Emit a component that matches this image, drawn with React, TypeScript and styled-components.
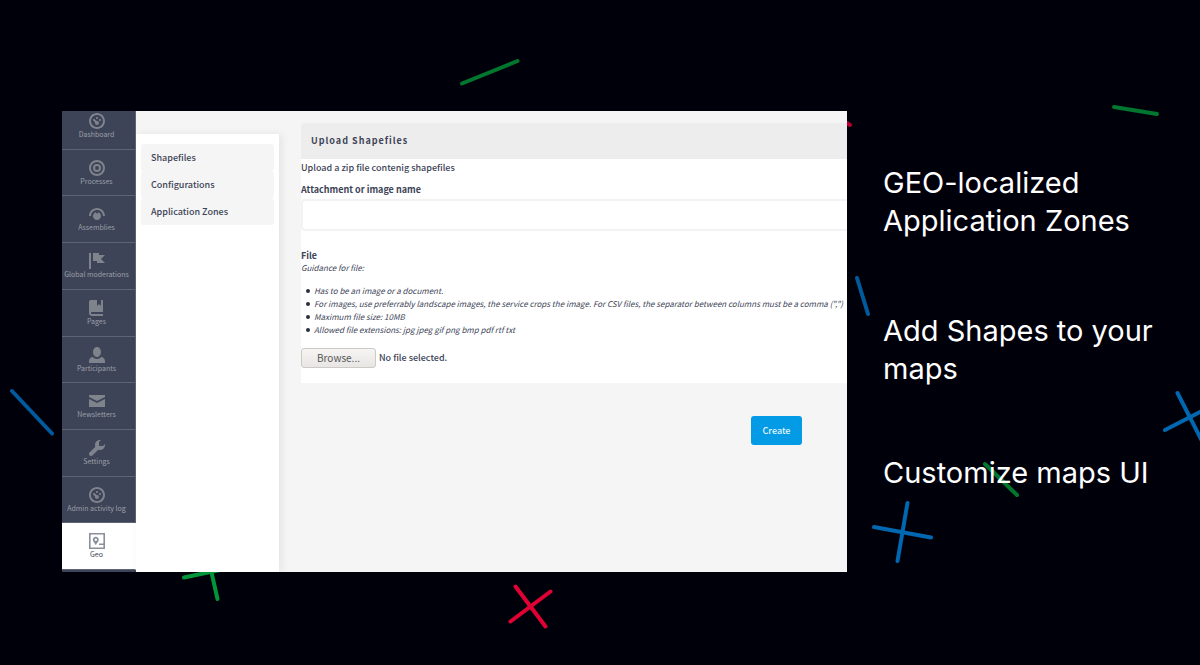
import React, { useRef, useState } from "react";
import styled, { createGlobalStyle } from "styled-components";

const sans = `"Noto Sans CJK SC", "Noto Sans", sans-serif`;
const ink = "#3d4457";

const GlobalStyle = createGlobalStyle`
  *, *::before, *::after { box-sizing: border-box; }
  body { margin: 0; background: #00000b; }
`;

const Page = styled.div`
  position: relative;
  min-height: 100vh;
  overflow: hidden;
  background: #00000b;
`;

const Confetti = styled.svg`
  position: absolute;
  top: 0;
  left: 0;
  fill: none;
  stroke-width: 4;
  stroke-linecap: round;
`;

const Slide = styled.main`
  position: relative;
  display: flex;
  align-items: flex-start;
  gap: 36px;
  padding: 111px 36px 93px 62px;
`;

const Screen = styled.section`
  flex: 1;
  min-width: 0;
  display: flex;
  overflow: hidden;
  background: #f5f5f5;
  color: ${ink};
  font-family: ${sans};
  font-size: 9px;
  font-weight: 500;
  line-height: 14px;
`;

const Sidebar = styled.nav`
  flex: none;
  width: 74px;
  min-height: 469px;
  margin-top: -8px;
  padding-bottom: 2px;
  display: flex;
  flex-direction: column;
  background: #3d4457;
`;

const SideLink = styled.a<{ $active?: boolean }>`
  flex: 1;
  display: flex;
  flex-direction: column;
  align-items: center;
  padding: 10px 4px 0 0;
  border-bottom: 1px solid #5d6473;
  border-right: 1px solid ${(p) => (p.$active ? "#fff" : "#5d6473")};
  background: ${(p) => (p.$active ? "#fff" : "#3d4457")};
  color: ${(p) => (p.$active ? "#3d4457" : "#9b9fa8")};
  font-size: 7px;
  font-weight: 400;
  line-height: 10px;
  white-space: nowrap;
  text-decoration: none;

  svg {
    flex: none;
    width: 16px;
    height: 16px;
    color: ${(p) => (p.$active ? "#8b8f9a" : "#7f838c")};
  }
`;

const Submenu = styled.nav`
  flex: none;
  width: 143px;
  margin-top: 23px;
  padding: 10px 5px;
  background: #fff;
  box-shadow: 3px 0 8px rgba(0, 0, 0, 0.07);
`;

const SubLink = styled.a`
  display: block;
  padding: 0 10px;
  border-radius: 3px;
  background: #f5f5f5;
  color: ${ink};
  line-height: 27px;
  text-decoration: none;
`;

const Form = styled.form`
  flex: 1;
  min-width: 0;
  padding: 12px 0 0 22px;
`;

const Card = styled.div`
  padding-bottom: 15px;
  border-radius: 3px 0 0 0;
  overflow: hidden;
  background: #fff;
`;

const CardTitle = styled.h2`
  margin: 0;
  padding: 0 10px;
  background: #ededed;
  font-size: 9px;
  line-height: 36px;
  letter-spacing: 1px;
`;

const Intro = styled.p`
  margin: 2px 0 8px;
`;

const FieldLabel = styled.label`
  display: block;
  font-weight: 700;
`;

const TextInput = styled.input`
  display: block;
  width: 100%;
  height: 32px;
  margin: 2px 0 18px;
  padding: 0 8px;
  border: 2px solid #f3f3f3;
  border-right: 0;
  border-radius: 4px 0 0 4px;
  background: #fff;
  color: ${ink};
  font: inherit;
`;

const Guidance = styled.div`
  font-size: 8px;
  font-weight: 400;
  font-style: italic;
  line-height: 10px;

  p { margin: 0; }
`;

const Rules = styled.ul`
  margin: 11px 0 12px;
  padding: 0 0 0 5px;
  list-style: none;
  line-height: 13px;
`;

const Rule = styled.li`
  display: flex;
  align-items: center;
  gap: 4px;
  white-space: nowrap;

  &::before {
    content: "";
    width: 4px;
    height: 4px;
    border-radius: 50%;
    background: #2b3040;
  }
`;

const FileRow = styled.div`
  display: flex;
  align-items: center;
  gap: 3px;
`;

const HiddenFile = styled.input`
  position: absolute;
  width: 1px;
  height: 1px;
  opacity: 0;
`;

const BrowseButton = styled.button`
  width: 75px;
  height: 20px;
  padding: 0;
  border: 1px solid #cdc9c5;
  border-radius: 3px;
  background: linear-gradient(#f6f5f4, #e8e6e4);
  color: #555;
  font-family: ${sans};
  font-size: 10px;
  line-height: 14px;
`;

const Actions = styled.div`
  display: flex;
  justify-content: flex-end;
  padding: 33px 45px 0 0;
`;

const CreateButton = styled.button`
  width: 51px;
  height: 29px;
  padding: 0;
  border: 0;
  border-radius: 3px;
  background: #039be5;
  color: #e6f5fd;
  font-family: ${sans};
  font-size: 9px;
  font-weight: 500;
`;

const Captions = styled.aside`
  flex: none;
  width: 281px;
  padding-top: 53px;
  color: #fff;
  font-family: Inter, "Liberation Sans", sans-serif;
`;

const Caption = styled.p<{ $after?: number }>`
  margin: 0 0 ${(p) => p.$after ?? 0}px;
  font-size: 29px;
  line-height: 38px;
`;

const Icon = ({ children }: { children: React.ReactNode }) => (
  <svg viewBox="0 0 8 8" fill="currentColor" aria-hidden="true">
    {children}
  </svg>
);

const gauge = (
  <path d="M4 0c-2.2 0-4 1.8-4 4s1.8 4 4 4 4-1.8 4-4-1.8-4-4-4zm0 1c1.66 0 3 1.34 3 3s-1.34 3-3 3-3-1.34-3-3 1.34-3 3-3zm0 1c-.28 0-.5.22-.5.5s.22.5.5.5.5-.22.5-.5-.22-.5-.5-.5zm-1.66 1a.5.5 0 0 0-.19.84l.91.91c-.02.08-.06.16-.06.25 0 .55.45 1 1 1s1-.45 1-1-.45-1-1-1c-.09 0-.17.04-.25.06l-.91-.91a.5.5 0 0 0-.5-.15zm3.16 0c-.28 0-.5.22-.5.5s.22.5.5.5.5-.22.5-.5-.22-.5-.5-.5z" />
);

const sections: { label: string; icon: React.ReactNode; active?: boolean }[] = [
  { label: "Dashboard", icon: gauge },
  {
    label: "Processes",
    icon: (
      <g fill="none" stroke="currentColor">
        <circle cx="4" cy="4" r="3.5" />
        <circle cx="4" cy="4" r="1.5" />
      </g>
    ),
  },
  {
    label: "Assemblies",
    icon: (
      <path d="M4 1c-2.2 0-4 1.8-4 4h1c0-1.66 1.34-3 3-3s3 1.34 3 3h1c0-2.2-1.8-4-4-4zm-.59 2.09c-.81.25-1.41 1.01-1.41 1.91 0 1.11.89 2 2 2 1.11 0 2-.89 2-2 0-.9-.59-1.65-1.41-1.91l-.59.88-.59-.88z" />
    ),
  },
  { label: "Global moderations", icon: <path d="M0 0v8h1v-8h-1zm2 0v4h2v1h4l-2-1.97 2-2.03h-3v-1h-3z" /> },
  {
    label: "Pages",
    icon: (
      <path d="M1 0c-.07 0-.13.01-.19.03-.39.08-.7.39-.78.78-.03.06-.03.12-.03.19v5.5c0 .83.67 1.5 1.5 1.5h5.5v-1h-5.5c-.28 0-.5-.22-.5-.5s.22-.5.5-.5h5.5v-5.500c0-.28-.22-.5-.5-.5h-.5v3l-1-1-1 1v-3h-3z" />
    ),
  },
  {
    label: "Participants",
    icon: (
      <path d="M4 0c-1.1 0-2 1.12-2 2.5s.9 2.5 2 2.5 2-1.12 2-2.5-.9-2.5-2-2.5zm-2.09 5c-1.06.05-1.91.92-1.91 2v1h8v-1c0-1.08-.84-1.95-1.91-2-.54.61-1.28 1-2.09 1-.81 0-1.55-.39-2.09-1z" />
    ),
  },
  { label: "Newsletters", icon: <path d="M0 1v1l4 2 4-2v-1h-8zm0 2v4h8v-4l-4 2-4-2z" /> },
  {
    label: "Settings",
    icon: (
      <path d="M5.5 0c-1.38 0-2.5 1.12-2.5 2.5 0 .32.08.62.19.91l-2.91 2.88c-.39.39-.39 1.05 0 1.44.2.2.46.28.72.28.26 0 .52-.09.72-.28l2.88-2.91c.28.11.58.19.91.19 1.38 0 2.5-1.12 2.5-2.5 0-.16 0-.32-.03-.47l-.97.97h-2v-2l.97-.97c-.15-.03-.31-.03-.47-.03z" />
    ),
  },
  { label: "Admin activity log", icon: gauge },
  {
    label: "Geo",
    active: true,
    icon: (
      <path
        fillRule="evenodd"
        d="M0 0h8v8h-8zM.8.8v6.4h6.4v-1.2h-2.2v-.8h2.2v-4.400zM3.400 1.900c-.9 0-1.500.7-1.500 1.500 0 1 .9 1.500 1.500 2.700.6-1.200 1.500-1.700 1.500-2.700 0-.8-.6-1.500-1.500-1.500zm0 .9a.6.6 0 1 1 0 1.200.6.6 0 0 1 0-1.200z"
      />
    ),
  },
];

const submenu = ["Shapefiles", "Configurations", "Application Zones"];

const rules = [
  "Has to be an image or a document.",
  'For images, use preferrably landscape images, the service crops the image. For CSV files, the separator between columns must be a comma (",")',
  "Maximum file size: 10MB",
  "Allowed file extensions: jpg jpeg gif png bmp pdf rtf txt",
];

export default function App() {
  const picker = useRef<HTMLInputElement>(null);
  const [fileName, setFileName] = useState("No file selected.");

  return (
    <Page>
      <GlobalStyle />
      <Confetti width="1200" height="665" viewBox="0 0 1200 665" aria-hidden="true">
        <g stroke="#00762f">
          <path d="M462 83.500L517.500 61" />
          <path d="M1114 107L1157 114" />
          <path d="M985 464L1017 495" />
        </g>
        <path stroke="#009639" d="M184 577.500L220 570M210.500 568L217.500 599" />
        <path stroke="#005a9c" d="M857 278L868 314M12 391L52 433.500" />
        <path
          stroke="#0067b1"
          d="M1177.500 393L1205 447M1165 430L1210 407M907.500 503L897.500 561M874 527L931 537.500"
        />
        <path stroke="#b3002d" d="M842 120L850 125" />
        <path stroke="#e00034" d="M515.500 586.500L545.500 626.500M550.500 591.500L510.500 621.500" />
      </Confetti>

      <Slide>
        <Screen>
          <Sidebar aria-label="Admin sections">
            {sections.map((s) => (
              <SideLink key={s.label} href="#" $active={s.active}>
                <Icon>{s.icon}</Icon>
                {s.label}
              </SideLink>
            ))}
          </Sidebar>

          <Submenu aria-label="Geo">
            {submenu.map((label) => (
              <SubLink key={label} href="#">
                {label}
              </SubLink>
            ))}
          </Submenu>

          <Form onSubmit={(e) => e.preventDefault()}>
            <Card>
              <CardTitle>Upload Shapefiles</CardTitle>
              <Intro>Upload a zip file contenig shapefiles</Intro>
              <FieldLabel htmlFor="title">Attachment or image name</FieldLabel>
              <TextInput id="title" type="text" />
              <FieldLabel htmlFor="file">File</FieldLabel>
              <Guidance>
                <p>Guidance for file:</p>
                <Rules>
                  {rules.map((rule) => (
                    <Rule key={rule}>{rule}</Rule>
                  ))}
                </Rules>
              </Guidance>
              <FileRow>
                <HiddenFile
                  ref={picker}
                  id="file"
                  type="file"
                  tabIndex={-1}
                  onChange={(e) => setFileName(e.target.files?.[0]?.name ?? "No file selected.")}
                />
                <BrowseButton type="button" onClick={() => picker.current?.click()}>
                  Browse...
                </BrowseButton>
                <span>{fileName}</span>
              </FileRow>
            </Card>
            <Actions>
              <CreateButton type="submit">Create</CreateButton>
            </Actions>
          </Form>
        </Screen>

        <Captions>
          <Caption $after={72}>GEO-localized Application Zones</Caption>
          <Caption $after={66}>Add Shapes to your maps</Caption>
          <Caption>Customize maps UI</Caption>
        </Captions>
      </Slide>
    </Page>
  );
}
